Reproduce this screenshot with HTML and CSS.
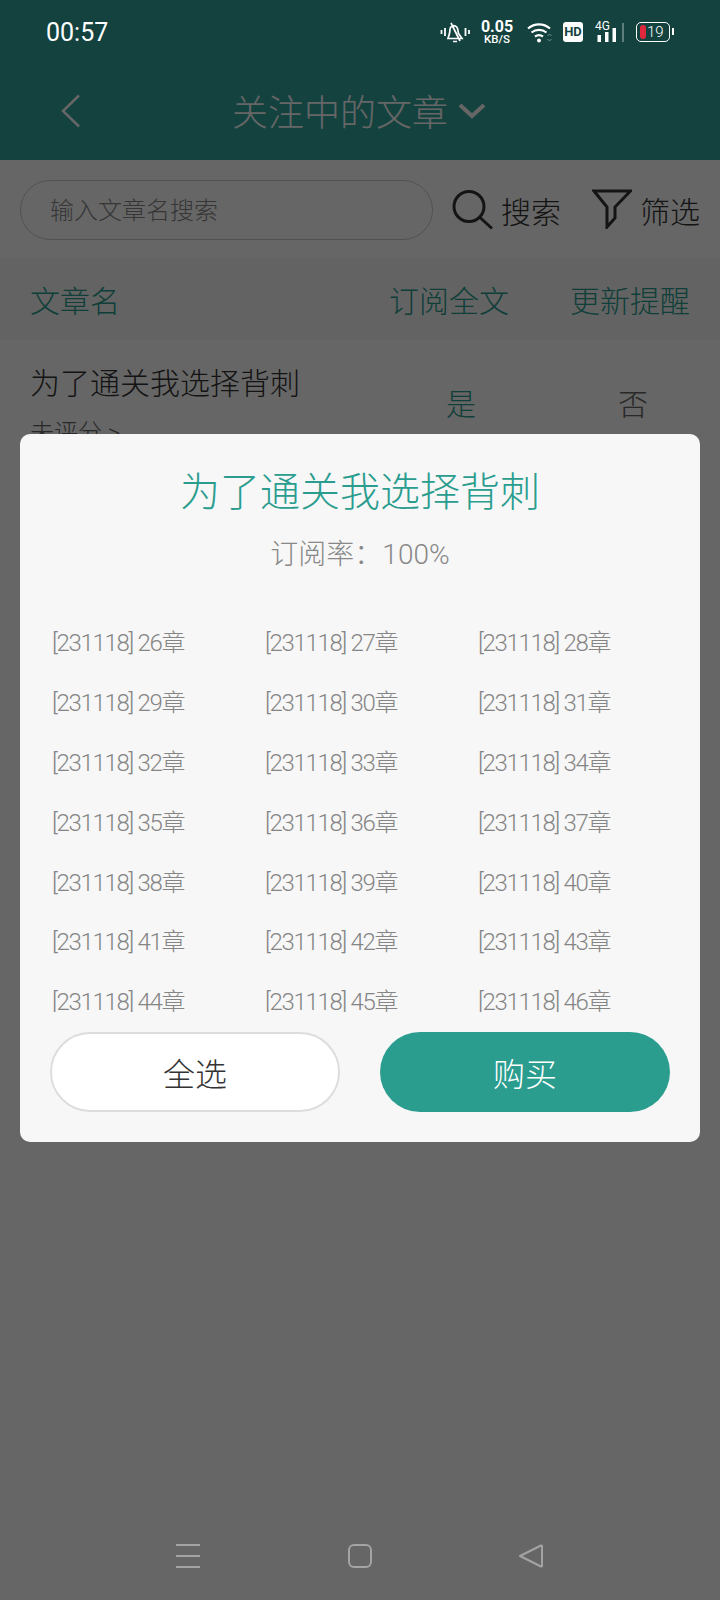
FILE: index.html
```html
<!DOCTYPE html>
<html lang="zh-CN">
<head>
    <meta charset="UTF-8">
    <meta name="viewport" content="width=device-width, initial-scale=1.0">
    <title>关注中的文章</title>
    <link rel="stylesheet" href="styles.css">
</head>

<body>
    <div class="page">
        <div class="header">
            <div class="title-bar">
                <svg class="back" width="22" height="34" viewBox="0 0 22 34"><path d="M19 1.500 3 17l16 15.500" fill="none" stroke="#fff" stroke-width="2.500"/></svg>
                <div class="page-title">关注中的文章</div>
                <svg class="chevron" width="28" height="16" viewBox="0 0 28 16"><path d="M2 2l12 11L26 2" fill="none" stroke="#fff" stroke-width="4"/></svg>
            </div>
        </div>

        <div class="search-row">
            <div class="search-input">输入文章名搜索</div>
            <svg class="search-icon" width="42" height="42" viewBox="0 0 42 42"><circle cx="17" cy="17.500" r="15" fill="none" stroke="#333" stroke-width="3"/><path d="M28 28.500 40 39.500" stroke="#333" stroke-width="3"/></svg>
            <span class="action search-label">搜索</span>
            <svg class="filter-icon" width="40" height="40" viewBox="0 0 40 40"><path d="M2 2h36.500L23 18v11l-8 9V18z" fill="none" stroke="#333" stroke-width="3"/></svg>
            <span class="action">筛选</span>
        </div>

        <div class="table-head">
            <div class="col-name">文章名</div>
            <div class="col-sub">订阅全文</div>
            <div class="col-remind">更新提醒</div>
        </div>

        <div class="table-row">
            <div class="col-name">
                <div class="row-title">为了通关我选择背刺</div>
                <div class="row-rate">未评分 &gt;</div>
            </div>
            <div class="col-sub yes">是</div>
            <div class="col-remind no">否</div>
        </div>
    </div>

    <div class="mask">
        <div class="status-bar">
            <span class="time">00:57</span>
            <div class="status-icons">
                <svg class="ic-bell" width="30" height="24" viewBox="0 0 30 24"><path d="M1.500 10v4M5 8v8M25.500 8v8M29 10v4" stroke="#fff" stroke-width="1.800"/><path d="M8 18.500h14l-3.500-5-1-5c-.7-2.500-3.300-3.500-5.500-2.500-1.500.7-2 2-2 3.500l-.5 4zM11 3l9 18M13 21.500h4" fill="none" stroke="#fff" stroke-width="1.700"/></svg>
                <div class="speed"><b>0.05</b><b class="unit">KB/S</b></div>
                <svg class="ic-wifi" width="25" height="22" viewBox="0 0 25 22"><path d="M1 7.500c6.500-5.500 15.500-5.500 22 0M4.500 11.500c4.500-3.500 10.500-3.500 15 0M8 15.500c2.500-1.700 5.500-1.700 8 0" fill="none" stroke="#fff" stroke-width="2.200"/><circle cx="12" cy="19.500" r="2" fill="#fff"/><path d="M20.500 15l2-2 2 2M20.500 18l2 2 2-2" fill="none" stroke="#6f8f8c" stroke-width="1"/></svg>
                <span class="hd">HD</span>
                <div class="net">
                    <span class="net-label">4G</span>
                    <svg width="30" height="20" viewBox="0 0 30 20"><path d="M2.500 12h3.500v7H2.500zM10 9h3.500v10H10zM17.500 5H21v14h-3.500z" fill="#fff"/><path d="M27 0h2v19h-2z" fill="#5f7f7c"/></svg>
                </div>
                <div class="battery">
                    <span class="battery-fill"></span>
                    <span class="battery-num">19</span>
                </div>
            </div>
        </div>

        <div class="dialog">
            <div class="dialog-title">为了通关我选择背刺</div>
            <div class="dialog-rate">订阅率：100%</div>
            <div class="chapters">
                <span>[231118] 26章</span><span>[231118] 27章</span><span>[231118] 28章</span>
                <span>[231118] 29章</span><span>[231118] 30章</span><span>[231118] 31章</span>
                <span>[231118] 32章</span><span>[231118] 33章</span><span>[231118] 34章</span>
                <span>[231118] 35章</span><span>[231118] 36章</span><span>[231118] 37章</span>
                <span>[231118] 38章</span><span>[231118] 39章</span><span>[231118] 40章</span>
                <span>[231118] 41章</span><span>[231118] 42章</span><span>[231118] 43章</span>
                <span>[231118] 44章</span><span>[231118] 45章</span><span>[231118] 46章</span>
            </div>
            <div class="dialog-buttons">
                <button class="btn btn-all">全选</button>
                <button class="btn btn-buy">购买</button>
            </div>
        </div>

        <div class="nav-bar">
            <svg width="26" height="26" viewBox="0 0 26 26"><path d="M1 2h24M1 13h24M1 24h24" stroke="#a3a3a3" stroke-width="2"/></svg>
            <svg width="26" height="26" viewBox="0 0 26 26"><rect x="2" y="2" width="22" height="22" rx="5" fill="none" stroke="#a3a3a3" stroke-width="2"/></svg>
            <svg width="26" height="26" viewBox="0 0 26 26"><path d="M2 13 23 2.500c.700-.300 1 0 1 .700v19.600c0 .700-.300 1-1 .700z" fill="none" stroke="#a3a3a3" stroke-width="2" stroke-linejoin="round"/></svg>
        </div>
    </div>
</body>
</html>
```

FILE: styles.css
```css
* {
    box-sizing: border-box;
}

body {
    margin: 0;
    font-family: "Roboto", "Noto Sans CJK SC", sans-serif;
    font-weight: 300;
    background: #fff;
}

.page {
    height: 1600px;
    overflow: hidden;
}

.header {
    height: 160px;
    padding-top: 64px;
    background: #30a69f;
}

.title-bar {
    display: flex;
    align-items: center;
    height: 94px;
    padding-left: 60px;
}

.back {
    margin-right: 150px;
}

.page-title {
    margin-top: -2px;
    font-size: 36px;
    color: #fff;
}

.chevron {
    margin-left: 10px;
}

.search-row {
    display: flex;
    align-items: center;
    height: 98px;
    padding-top: 2px;
    padding-left: 20px;
}

.search-input {
    width: 413px;
    height: 60px;
    padding-left: 29px;
    border: 1px solid #ccc;
    border-radius: 30px;
    font-size: 24px;
    line-height: 60px;
    color: #888;
}

.search-icon {
    margin-left: 19px;
    margin-right: 7px;
}

.filter-icon {
    margin-top: -2px;
    margin-left: 31px;
    margin-right: 8px;
}

.action {
    font-size: 30px;
    color: #333;
}

.table-head {
    display: flex;
    align-items: center;
    height: 82px;
    background: #f7f8f7;
    font-size: 30px;
    color: #2a9d8f;
}

.table-row {
    display: flex;
    align-items: center;
    height: 130px;
}

.col-name {
    width: 389px;
    padding-left: 30px;
}

.col-sub {
    width: 181px;
}

.col-remind {
    width: 149px;
}

.row-title {
    margin-top: -4px;
    font-size: 30px;
    color: #333;
}

.row-rate {
    margin-top: 10px;
    font-size: 24px;
    color: #666;
}

.yes,
.no {
    font-size: 30px;
    margin-top: -6px;
    color: #2a9d8f;
}

.yes {
    padding-left: 57px;
}

.no {
    padding-left: 48px;
    color: #666;
}

.mask {
    position: absolute;
    top: 0;
    left: 0;
    width: 720px;
    height: 1600px;
    background: rgba(0, 0, 0, 0.6);
}

.status-bar {
    display: flex;
    align-items: center;
    justify-content: space-between;
    height: 64px;
    padding: 0 50px 0 46px;
    color: #fff;
}

.time {
    font-size: 25px;
    font-weight: 400;
}

.status-icons {
    display: flex;
    align-items: center;
}

.ic-bell {
    margin-right: 11px;
}

.speed {
    display: flex;
    flex-direction: column;
    align-items: center;
    width: 32px;
    margin-right: 14px;
}

.speed b {
    font-size: 16px;
    font-weight: 700;
    line-height: 13px;
}

.speed .unit {
    margin-top: 1px;
    font-size: 11.500px;
    font-weight: 500;
    line-height: 10px;
}

.ic-wifi {
    margin-right: 11px;
}

.hd {
    width: 20px;
    height: 20px;
    margin-right: 12px;
    border-radius: 3px;
    background: #fff;
    color: #134240;
    font-size: 13px;
    font-weight: 700;
    line-height: 20px;
    text-align: center;
}

.net {
    position: relative;
    width: 30px;
    height: 24px;
    margin-right: 11px;
}

.net svg {
    position: absolute;
    left: 0;
    bottom: 1px;
}

.net-label {
    position: absolute;
    top: 0;
    left: 0;
    font-size: 12px;
    font-weight: 400;
    line-height: 12px;
}

.battery {
    position: relative;
    display: flex;
    align-items: center;
    width: 34px;
    height: 20px;
    padding-left: 3px;
    border: 1.500px solid #fff;
    border-radius: 5px;
}

.battery::after {
    content: "";
    position: absolute;
    right: -5px;
    top: 5px;
    width: 2px;
    height: 7px;
    background: #fff;
}

.battery-fill {
    width: 6px;
    height: 14px;
    border-radius: 3px;
    background: #e0283c;
}

.battery-num {
    margin-left: 1px;
    font-size: 15px;
    line-height: 17px;
}

.dialog {
    position: absolute;
    top: 434px;
    left: 20px;
    width: 680px;
    height: 708px;
    padding-top: 32px;
    border-radius: 10px;
    background: #f7f7f7;
}

.dialog-title {
    font-size: 40px;
    line-height: 54px;
    color: #2a9d8f;
    text-align: center;
}

.dialog-rate {
    margin-top: 17px;
    font-size: 28px;
    line-height: 36px;
    color: #888;
    text-align: center;
}

.chapters {
    display: grid;
    grid-template-columns: 213px 213px 213px;
    grid-auto-rows: 59.800px;
    align-items: center;
    height: 401px;
    margin-top: 38px;
    padding-left: 32px;
    overflow: hidden;
    font-size: 24px;
    letter-spacing: -1.300px;
    color: #858585;
}

.dialog-buttons {
    display: flex;
    justify-content: space-between;
    margin-top: 20px;
    padding: 0 30px;
}

.btn {
    width: 290px;
    height: 80px;
    border-radius: 40px;
    font-family: inherit;
    font-weight: 300;
    font-size: 32px;
}

.btn-all {
    border: 2px solid #ddd;
    background: #fff;
    color: #333;
}

.btn-buy {
    border: none;
    background: #2a9d8f;
    color: #fff;
}

.nav-bar {
    position: absolute;
    left: 175px;
    top: 1543px;
    display: flex;
    justify-content: space-between;
    width: 369px;
}
```
